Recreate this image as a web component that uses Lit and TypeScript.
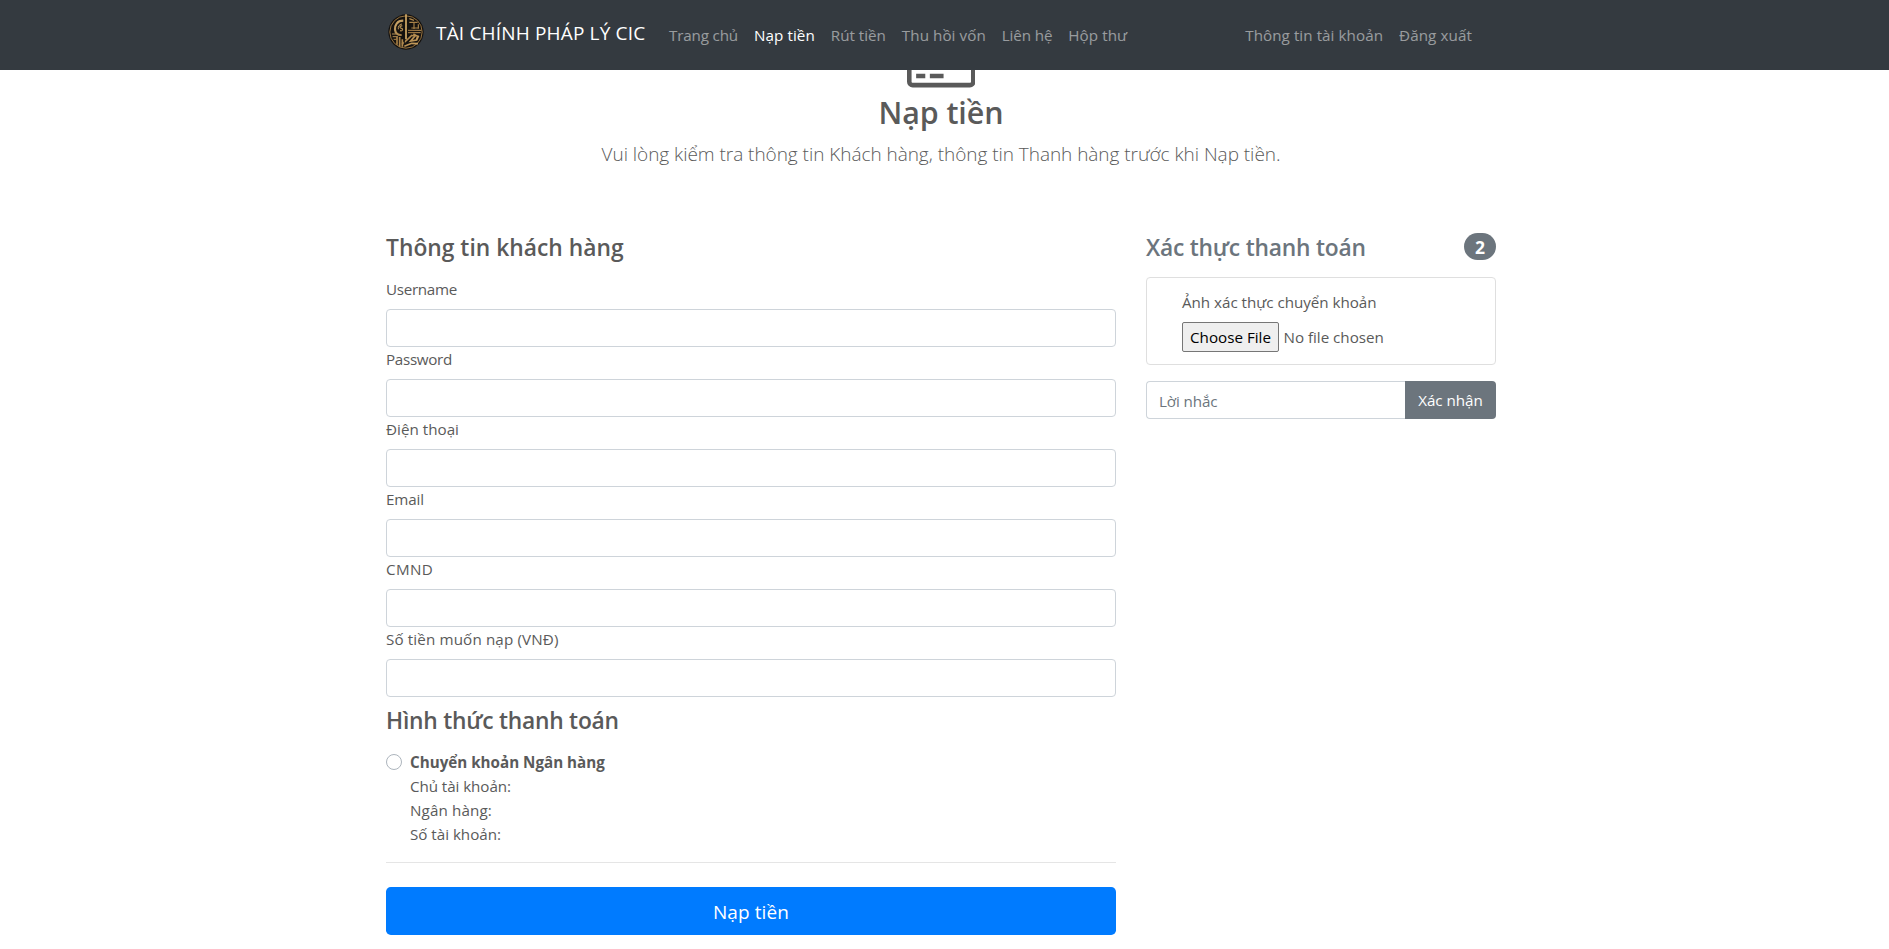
import { LitElement, html, css } from "lit";
import { customElement } from "lit/decorators.js";
import { styleMap } from "lit/directives/style-map.js";

/** A piece of text with its own tracking, in px. */
type Label = [text: string, tracking: number];

const MENU: Label[] = [
  ["Trang chủ", -0.16],
  ["Nạp tiền", 0.08],
  ["Rút tiền", -0.02],
  ["Thu hồi vốn", 0.07],
  ["Liên hệ", -0.13],
  ["Hộp thư", 0.09],
];
const ACCOUNT: Label[] = [
  ["Thông tin tài khoản", 0.06],
  ["Đăng xuất", 0.1],
];
const FIELDS: Label[] = [
  ["Username", -0.3],
  ["Password", -0.31],
  ["Điện thoại", 0.02],
  ["Email", -0.12],
  ["CMND", 0.33],
  ["Số tiền muốn nạp (VNĐ)", 0.13],
];
const BANK: Label[] = [
  ["Chủ tài khoản:", -0.07],
  ["Ngân hàng:", 0.13],
  ["Số tài khoản:", -0.02],
];

const text = ([value, tracking]: Label) =>
  html`<span style=${styleMap({ letterSpacing: `${tracking}px` })}>${value}</span>`;

@customElement("site-logo")
export class SiteLogo extends LitElement {
  static styles = css`
    :host { display: block; width: 36px; height: 36px; }
    svg { display: block; width: 100%; height: 100%; }
  `;

  render() {
    return html`<svg viewBox="0 0 108 108" fill="none">
      <defs>
        <linearGradient id="gold" gradientUnits="userSpaceOnUse" x1="10" y1="10" x2="98" y2="98">
          <stop offset="0" stop-color="#dcb878" />
          <stop offset=".5" stop-color="#a37c43" />
          <stop offset="1" stop-color="#d0a766" />
        </linearGradient>
      </defs>
      <circle cx="54" cy="54" r="53" fill="#15120f" />
      <circle cx="54" cy="54" r="48.5" stroke="#94713f" stroke-width="3" />
      <g stroke="url(#gold)" stroke-width="5">
        <path d="M46 20C27 20 20 34 21 47c1 11 9 17 20 16" stroke-width="6.5" />
        <path d="M42 30c-9 1-12 8-11 16" stroke-width="3" />
        <path d="M43 36c-8-2-9 6-3 7s5 9-4 7" stroke-width="3.5" />
        <path d="M12 60h12M14 68h11M17 76h9" stroke-width="3" />
        <path d="M27 66v26M35 69v29M43 76v22" />
        <path d="M64 14l14 5M64 25h25M78 25v20M70 42h20M91 31v13" stroke-width="3.5" />
        <path d="M60 49h40M60 56h38" stroke-width="3" />
        <path d="M42 91l15-13 14-14 9 3-12 14 18-3 6-13M49 97l22-9 19 1M76 60l13 7-4 12" stroke-width="5" />
      </g>
      <path d="M49 10v80" stroke="#15120f" stroke-width="3" />
      <path d="M54 1v75" stroke="#d6ad69" stroke-width="5" />
    </svg>`;
  }
}

@customElement("site-navbar")
export class SiteNavbar extends LitElement {
  static styles = css`
    :host {
      position: fixed;
      inset: 0 0 auto;
      z-index: 10;
      box-sizing: border-box;
      height: 70px;
      padding-right: 7px;
      background: #343a40;
    }
    .inner {
      box-sizing: border-box;
      width: 1140px;
      height: 70px;
      margin: 0 auto;
      padding: 0 17px;
      display: flex;
      align-items: center;
    }
    .brand {
      display: flex;
      align-items: center;
      gap: 12px;
      margin-right: 17px;
      padding-bottom: 6px;
      color: #fff;
      font-size: 19px;
      line-height: 30px;
      white-space: nowrap;
    }
    .name { padding-top: 2px; width: 208px; }
    .menu { display: flex; margin-right: auto; }
    .account { display: flex; margin-right: 14px; }
    .link {
      padding: 8px;
      line-height: 24px;
      color: rgba(255, 255, 255, 0.5);
      white-space: nowrap;
    }
    .active { color: #fff; }
  `;

  render() {
    return html`<nav class="inner">
      <div class="brand">
        <site-logo></site-logo>
        <div class="name">${text(["TÀI CHÍNH PHÁP LÝ CIC", 0.17])}</div>
      </div>
      <div class="menu">
        ${MENU.map((m, i) => html`<a class="link ${i === 1 ? "active" : ""}">${text(m)}</a>`)}
      </div>
      <div class="account">${ACCOUNT.map((m) => html`<a class="link">${text(m)}</a>`)}</div>
    </nav>`;
  }
}

@customElement("app-root")
export class AppRoot extends LitElement {
  static styles = css`
    :host {
      display: block;
      box-sizing: border-box;
      height: 949px;
      padding-right: 7px;
      overflow: hidden;
      background: #fff;
      color: #5a5a5a;
      font: 400 15.2px/24px "Open Sans", "Noto Sans", sans-serif;
    }
    .page {
      width: 1110px;
      margin: 0 auto;
      padding-top: 28.2px;
    }
    .intro {
      display: flex;
      flex-direction: column;
      align-items: center;
      margin-bottom: 64px;
      white-space: nowrap;
    }
    .card-icon { display: block; width: 68.57px; height: 64px; fill: #5a5a5a; }
    h2, h4, p { margin: 0; }
    h2 { font-size: 30.4px; font-weight: 600; line-height: 38.4px; padding-top: 2px; margin-bottom: 6px; }
    .lead { font-size: 19px; font-weight: 300; line-height: 30px; }
    h4 {
      box-sizing: border-box;
      height: 28.8px;
      padding-top: 1.2px;
      font-size: 22.8px;
      font-weight: 600;
      line-height: 28.8px;
      margin-bottom: 16px;
    }
    .columns {
      display: grid;
      grid-template-columns: 730px 350px;
      gap: 30px;
      align-items: start;
    }
    .field { display: flex; flex-direction: column; gap: 8px; }
    .control {
      box-sizing: border-box;
      height: 38px;
      width: 100%;
      margin: 0;
      padding: 6px 12px;
      border: 1px solid #ced4da;
      border-radius: 4px;
      background: #fff;
      color: #495057;
      font: inherit;
    }
    .fields { margin-bottom: 8px; }
    .method { display: flex; gap: 8px; }
    .radio {
      box-sizing: border-box;
      width: 16px;
      height: 16px;
      margin-top: 4px;
      border: 1px solid #adb5bd;
      border-radius: 50%;
    }
    .bold { font-weight: 700; }
    .rule { height: 1px; margin: 16px 0 24px; background: rgba(0, 0, 0, 0.1); }
    .submit {
      display: block;
      width: 100%;
      height: 48px;
      padding: 1px 0 0;
      border: 0;
      border-radius: 4.8px;
      background: #007bff;
      color: #fff;
      font: inherit;
      font-size: 19px;
    }
    .side-head {
      display: flex;
      align-items: flex-start;
      justify-content: space-between;
      height: 44.8px;
      color: #6c757d;
    }
    .badge {
      box-sizing: border-box;
      width: 32px;
      height: 27px;
      margin-top: 0.6px;
      border-radius: 160px;
      background: #6c757d;
      color: #fff;
      font-size: 17.5px;
      font-weight: 700;
      line-height: 28px;
      text-align: center;
    }
    .upload {
      box-sizing: border-box;
      height: 88px;
      padding: 12px 35px;
      border: 1px solid #dfdfdf;
      border-radius: 4px;
      display: flex;
      flex-direction: column;
      gap: 8px;
      margin-bottom: 16px;
    }
    .file { display: flex; align-items: center; gap: 4.5px; }
    .choose {
      box-sizing: border-box;
      width: 97px;
      height: 30px;
      border: 1px solid #767676;
      border-radius: 2px;
      background: #efefef;
      color: #000;
      line-height: 28px;
      text-align: center;
      white-space: nowrap;
    }
    .note { display: flex; }
    .note .control {
      flex: 1;
      padding: 8px 12px 6px;
      border-right: 0;
      border-radius: 4px 0 0 4px;
      letter-spacing: -0.12px;
    }
    .note .control::placeholder { color: #6c757d; opacity: 1; }
    .confirm {
      width: 91px;
      height: 38px;
      padding: 0;
      border: 0;
      border-radius: 0 4px 4px 0;
      background: #6c757d;
      color: #fff;
      font: inherit;
    }
  `;

  render() {
    return html`
      <site-navbar></site-navbar>
      <main class="page">
        <header class="intro">
          <svg class="card-icon" viewBox="0 0 1920 1792">
            <path
              d="M1760 128q66 0 113 47t47 113v1216q0 66-47 113t-113 47h-1600q-66 0-113-47t-47-113v-1216q0-66 47-113t113-47h1600zM160 256q-13 0-22.5 9.5t-9.5 22.5v224h1664v-224q0-13-9.5-22.5t-22.5-9.5h-1600zM1760 1536q13 0 22.5-9.5t9.5-22.5v-608h-1664v608q0 13 9.5 22.5t22.5 9.5h1600zM256 1408v-128h256v128h-256zM640 1408v-128h384v128h-384z"
            />
          </svg>
          <h2>${text(["Nạp tiền", -0.1])}</h2>
          <p class="lead">
            ${text(["Vui lòng kiểm tra thông tin Khách hàng, thông tin Thanh hàng trước khi Nạp tiền.", -0.04])}
          </p>
        </header>
        <div class="columns">
          <section>
            <h4>${text(["Thông tin khách hàng", 0.01])}</h4>
            <div class="fields">
              ${FIELDS.map(
                (f) => html`<label class="field">${text(f)}<input class="control" /></label>`,
              )}
            </div>
            <h4>${text(["Hình thức thanh toán", -0.24])}</h4>
            <div class="method">
              <div class="radio"></div>
              <div>
                <div class="bold">${text(["Chuyển khoản Ngân hàng", 0])}</div>
                ${BANK.map((b) => html`<div>${text(b)}</div>`)}
              </div>
            </div>
            <div class="rule"></div>
            <button class="submit">${text(["Nạp tiền", 0.09])}</button>
          </section>
          <aside>
            <div class="side-head">
              <h4>${text(["Xác thực thanh toán", -0.22])}</h4>
              <div class="badge">2</div>
            </div>
            <div class="upload">
              ${text(["Ảnh xác thực chuyển khoản", -0.03])}
              <div class="file">
                <div class="choose">Choose File</div>
                ${text(["No file chosen", -0.02])}
              </div>
            </div>
            <div class="note">
              <input class="control" placeholder="Lời nhắc" />
              <button class="confirm">${text(["Xác nhận", -0.02])}</button>
            </div>
          </aside>
        </div>
      </main>
    `;
  }
}
